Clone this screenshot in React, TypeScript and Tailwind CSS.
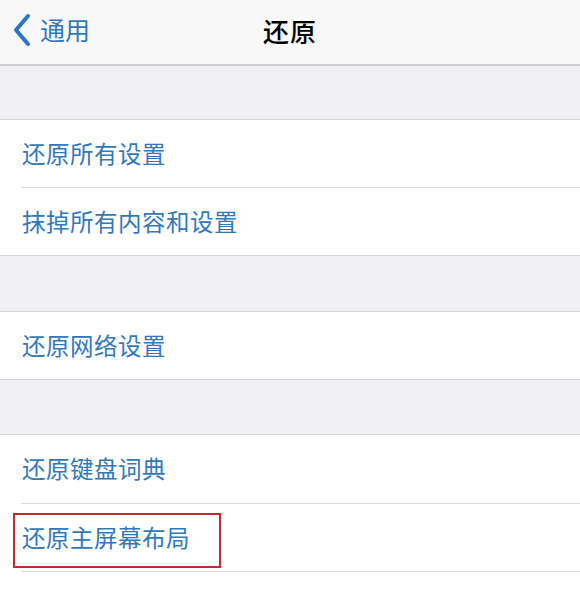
import React from "react";

const FONT = { fontFamily: '"Noto Sans CJK SC", "Noto Sans", sans-serif' };

function Row({ label, last, marked, tall }: { label: string; last?: boolean; marked?: boolean; tall?: boolean }) {
  return (
    <div className="relative bg-white">
      <div
        className={`${tall ? "h-[68px]" : "h-[67px]"} flex items-center pl-[22px] text-[23.5px] text-[#3178bb] tracking-[0.5px]`}
      >
        {label}
      </div>
      {!last && <div className="ml-[21px] h-px bg-[#dcdce0]" />}
      {marked && (
        <div className="absolute left-[13px] top-[9px] w-[208px] h-[55px] border-2 border-[#c42b31]" />
      )}
    </div>
  );
}

export default function App() {
  return (
    <div className="w-[580px] h-[595px] overflow-hidden bg-[#efeff4]" style={FONT}>
      <div className="relative h-[66px] bg-[#f8f8f8] border-b-2 border-[#cfcfd3] flex items-center justify-center">
        <div className="absolute left-[12px] top-0 h-full flex items-center gap-[9px] text-[#3178bb]">
          <svg width="19" height="34" viewBox="0 0 19 34" className="mb-[4px]">
            <path d="M16 3 L4 17 L16 31" fill="none" stroke="#2a74c4" strokeWidth="4" strokeLinecap="round" strokeLinejoin="round" />
          </svg>
          <span className="text-[25px] mb-[4px]">通用</span>
        </div>
        <span className="text-[26px] font-medium text-black mb-[4px] tracking-[1px]">还原</span>
      </div>
      <div className="h-[54px] bg-[#efeff4] border-b border-[#d6d6da]" />
      <Row label="还原所有设置" />
      <Row label="抹掉所有内容和设置" last />
      <div className="border-t border-[#d6d6da]" />
      <div className="h-[56px] bg-[#efeff4] border-b border-[#d6d6da]" />
      <Row label="还原网络设置" last />
      <div className="border-t border-[#d6d6da]" />
      <div className="h-[55px] bg-[#efeff4] border-b border-[#d6d6da]" />
      <Row label="还原键盘词典" tall />
      <Row label="还原主屏幕布局" marked />
      <div className="h-[30px] bg-white" />
    </div>
  );
}
